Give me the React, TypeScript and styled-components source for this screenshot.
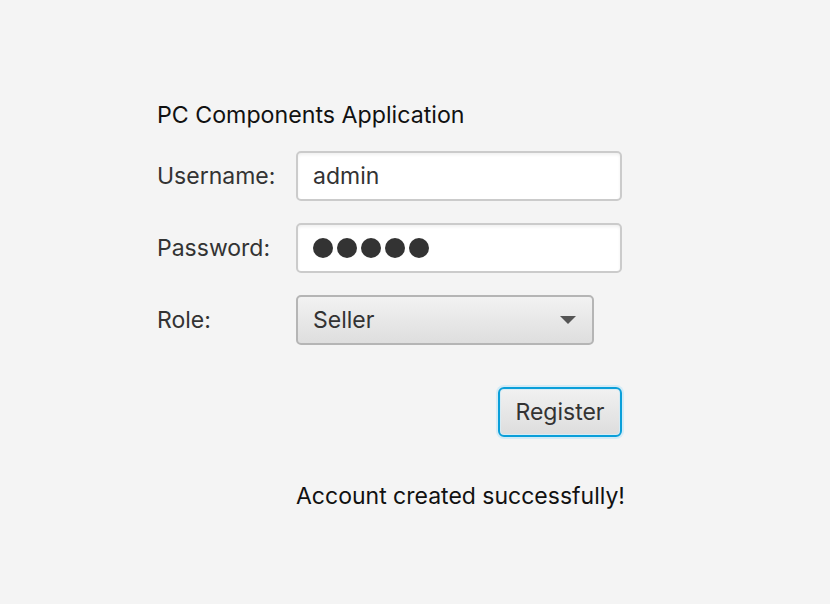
import styled, { createGlobalStyle } from "styled-components";

const GlobalStyle = createGlobalStyle`
  html, body {
    margin: 0;
    padding: 0;
    background: #f4f4f4;
  }
  body {
    font-family: Inter, "Noto Sans", sans-serif;
  }
`;

export default function App() {
  return (
    <>
      <GlobalStyle />
      <Page>
        <Form>
          <Title>PC Components Application</Title>
          <Label>Username:</Label>
          <TextField defaultValue="admin" />
          <Label>Password:</Label>
          <PasswordField>
            {[0, 1, 2, 3, 4].map((i) => (
              <Dot key={i} />
            ))}
          </PasswordField>
          <Label>Role:</Label>
          <ComboBox>
            <span>Seller</span>
            <Arrow />
          </ComboBox>
          <ButtonCell>
            <Button>Register</Button>
          </ButtonCell>
          <Message>Account created successfully!</Message>
        </Form>
      </Page>
    </>
  );
}

const Page = styled.div`
  width: 830px;
  height: 604px;
  padding: 101px 0 0 157px;
  box-sizing: border-box;
`;

const Form = styled.div`
  display: grid;
  grid-template-columns: 139px 326px;
  row-gap: 22px;
  align-items: center;
`;

const Title = styled.div`
  grid-column: 1 / span 2;
  height: 28px;
  line-height: 28px;
  font-size: 23.2px;
  color: #111;
`;

const Label = styled.div`
  font-size: 23px;
  color: #333;
`;

const fieldBase = `
  height: 50px;
  box-sizing: border-box;
  border-radius: 5px;
  font-family: Inter, "Noto Sans", sans-serif;
  font-size: 23px;
  color: #333;
`;

const TextField = styled.input`
  ${fieldBase}
  width: 326px;
  border: 2px solid #cbcbcb;
  background: #fff;
  box-shadow: inset 0 2px 3px rgba(0, 0, 0, 0.06);
  padding: 0 15px;
  outline: none;
`;

const PasswordField = styled.div`
  ${fieldBase}
  width: 326px;
  border: 2px solid #cbcbcb;
  background: #fff;
  box-shadow: inset 0 2px 3px rgba(0, 0, 0, 0.06);
  padding: 0 15px;
  display: flex;
  align-items: center;
  gap: 4px;
`;

const Dot = styled.span`
  width: 20px;
  height: 20px;
  border-radius: 50%;
  background: #333;
`;

const ComboBox = styled.div`
  ${fieldBase}
  width: 298px;
  border: 2px solid #b5b5b5;
  background: linear-gradient(#f2f2f2, #dedede);
  padding: 0 15px;
  display: flex;
  align-items: center;
  justify-content: space-between;
`;

const Arrow = styled.span`
  width: 0;
  height: 0;
  margin-right: 1px;
  border-left: 8px solid transparent;
  border-right: 8px solid transparent;
  border-top: 8px solid #555;
`;

const ButtonCell = styled.div`
  grid-column: 2;
  display: flex;
  justify-content: flex-end;
  margin-top: 20px;
`;

const Button = styled.button`
  width: 124px;
  height: 50px;
  box-sizing: border-box;
  border: 2px solid #0a9fd9;
  border-radius: 6px;
  background: linear-gradient(#f1f1f1, #dddddd);
  box-shadow: 0 0 0 2px #d3ebf6, inset 0 0 0 1px #d7ecf5;
  font-family: Inter, "Noto Sans", sans-serif;
  font-size: 23px;
  color: #333;
  padding: 0;
`;

const Message = styled.div`
  grid-column: 2;
  margin-top: 23px;
  height: 28px;
  line-height: 28px;
  font-size: 23px;
  color: #111;
  white-space: nowrap;
`;
